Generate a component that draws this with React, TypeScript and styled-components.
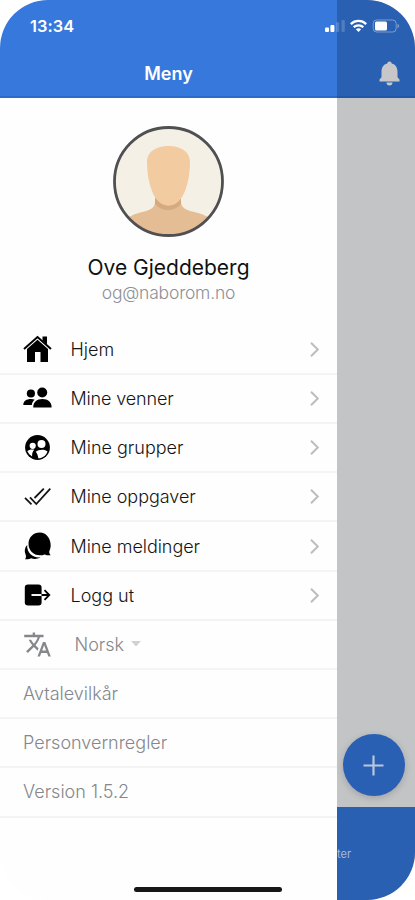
import React from "react";
import styled, { createGlobalStyle } from "styled-components";
import { MdTranslate } from "react-icons/md";

const GlobalStyle = createGlobalStyle`
  * { box-sizing: border-box; }
  body { margin: 0; background: #fff; font-family: Inter, "Liberation Sans", sans-serif; }
`;

const Screen = styled.main`
  position: relative;
  display: grid;
  grid-template-columns: 337px 78px;
  width: 415px;
  height: 900px;
  border-radius: 48px;
  overflow: hidden;
  background: #fff;
`;

const Drawer = styled.aside`
  display: flex;
  flex-direction: column;
  background: #fefefe;
`;

const DrawerHeader = styled.header`
  height: 97.5px;
  padding: 63px 0 0;
  background: #3778dc;
  border-bottom: 2px solid #2a6bcb;
  color: #fff;
  text-align: center;
  font-size: 18px;
  line-height: 22px;
  font-weight: 600;
`;

const StatusBar = styled.div`
  position: absolute;
  inset: 0 0 auto;
  display: flex;
  justify-content: space-between;
  padding: 16px 15px 0 30px;
`;

const Clock = styled.time`
  color: #fff;
  font-size: 16.4px;
  line-height: 20px;
  font-weight: 600;
  letter-spacing: 0.05px;
`;

const Profile = styled.section`
  display: flex;
  flex-direction: column;
  align-items: center;
  height: 228.2px;
  padding-top: 28px;
`;

const Name = styled.h1`
  margin: 17.500px 0 0;
  font-size: 21px;
  line-height: 28px;
  font-weight: 400;
  color: #111;
`;

const Email = styled.div`
  font-size: 17.5px;
  line-height: 22px;
  font-weight: 300;
  letter-spacing: -0.2px;
  color: #8f9095;
`;

const Row = styled.div<{ $muted?: boolean }>`
  display: flex;
  align-items: center;
  height: 49.2px;
  padding: 0 17px 0 23px;
  border-bottom: 2px solid #f4f4f5;
  color: ${(p) => (p.$muted ? "#85878b" : "#151515")};
  font-size: 18px;
  font-weight: 300;
`;

const IconBox = styled.span`
  display: flex;
  flex: none;
  width: 29px;
  margin-right: 18.5px;
`;

const Label = styled.span<{ $spacing?: number }>`
  letter-spacing: ${(p) => p.$spacing ?? 0}px;
  white-space: nowrap;
`;

const LanguageLabel = styled(Label)`
  margin: 0 7px 0 4px;
`;

const Chevron = styled.svg`
  margin-left: auto;
`;

const Backdrop = styled.section`
  display: flex;
  flex-direction: column;
  background: #c3c4c6;
`;

const BackdropHeader = styled.header`
  display: flex;
  justify-content: flex-end;
  height: 97.5px;
  padding: 61px 15px 0 0;
  background: #2a60b2;
  border-bottom: 2px solid #2058a9;
`;

const BackdropBody = styled.div`
  display: flex;
  flex: 1;
  align-items: flex-end;
  padding: 0 0 11px 5.5px;
`;

const AddButton = styled.button`
  display: grid;
  place-items: center;
  width: 62px;
  height: 62px;
  padding: 0;
  border: 0;
  border-radius: 50%;
  background: #2a60b4;
  box-shadow: 0 2px 7px rgba(0, 0, 0, 0.18);
`;

const TabBar = styled.nav`
  height: 93px;
  padding: 40px 0 0;
  background: #2a60b2;
  color: #a9b9d3;
  font-size: 11px;
  line-height: 14px;
`;

const HomeIndicator = styled.div`
  position: absolute;
  bottom: 8.5px;
  left: 134px;
  width: 148px;
  height: 5px;
  border-radius: 3px;
  background: #171717;
`;

const HomeIcon = () => (
  <svg width="29" height="28" viewBox="0 0 29 28">
    <path d="M1 14 14.5 2 28 14" fill="none" stroke="#000" strokeWidth="2" />
    <path d="M19.5 1.500H24V9.500L19.500 5.500ZM14.500 4.800 25 14V27H17.500V17H12V27H4V14Z" />
  </svg>
);

const FriendsIcon = () => (
  <svg width="29" height="22" viewBox="0 0 29 22">
    <circle cx="7.900" cy="6.500" r="4.100" />
    <path d="M.300 18C.300 14 3.500 12 8 12c1.500 0 2.700.2 3.800.8C9.800 14.200 9 16 8.800 18Z" />
    <circle cx="19.200" cy="5.500" r="5" />
    <path d="M10.200 20.500C10.200 15 13.700 12 19.400 12S28.600 15 28.600 20.500Z" />
  </svg>
);

const GroupsIcon = () => (
  <svg width="29" height="29" viewBox="0 0 29 29">
    <circle cx="14.500" cy="14.500" r="12.400" />
    <g fill="#fff">
      <circle cx="18.500" cy="11" r="4" />
      <circle cx="9.700" cy="12.800" r="3.100" />
      <path d="M12.800 18.800c2.200-2.200 8.800-3 11.700-.4-1 3.600-4.600 6.700-9.200 6.900-.3-2.600-1-4.600-2.500-6.500Z" />
      <path d="M4.300 18c1.700-1.500 4.500-2 7-1.200-1.600 1.500-2.400 3.700-2.200 6.800A10.500 10.500 0 0 1 4.300 18Z" />
    </g>
  </svg>
);

const TasksIcon = () => (
  <svg width="29" height="22" viewBox="0 0 29 22" fill="none" stroke="#151515" strokeWidth="1.800">
    <path d="m2 11.800 6.500 6.500M7 11.300l6.300 6.700L27.300 2.600M11.500 12 20.800 2.600" />
  </svg>
);

const MessagesIcon = () => (
  <svg width="29" height="30" viewBox="0 0 29 30">
    <path d="M4.200 14C3.500 22 10.500 27.300 17.500 26.300 14.500 28.500 10.500 28.300 8 27.200 6.300 28.300 4.500 28.500 2 28.200 3.300 26.800 3.200 25.200 2.500 23.300 1.200 20.300 1.600 16.500 4.200 14Z" />
    <path d="M16.800 1.500C10.500 1.500 5.500 6.200 5.500 12.800S10.300 24.300 16.800 24.300c2 0 3.700-.4 5-.9 1.500.8 3.400 1.100 6 .8-1.300-1.200-1.800-2.300-1.500-4C30.200 12.300 25.500 1.500 16.800 1.500Z" />
  </svg>
);

const LogoutIcon = () => (
  <svg width="29" height="22" viewBox="0 0 29 22">
    <rect x="1.800" y=".500" width="16.800" height="21" rx="3.200" />
    <path d="M8.500 11h10.100" stroke="#fff" strokeWidth="1.900" />
    <path d="M18.600 11h8M21.500 6.200 26.300 11l-4.800 4.800" fill="none" stroke="#000" strokeWidth="1.800" />
  </svg>
);

const Avatar = () => (
  <svg width="111" height="111" viewBox="0 0 111 111">
    <defs>
      <clipPath id="avatar-circle"><circle cx="55.500" cy="55.500" r="54" /></clipPath>
    </defs>
    <g clipPath="url(#avatar-circle)">
      <rect width="111" height="111" fill="#f5f0e5" />
      <path d="M0 98 18 90C27 85 42 86 42 76V70H68V76C68 86 84 85 93 90L111 98V111H0Z" fill="#e5bd94" />
      <path d="M42 73h26v5c-7 8-19 8-26 0Z" fill="#d5aa80" />
      <path d="M55.500 20C44 20 34 25 34 36c0 16 4 29 8 35 7 11.500 20 11.500 27 0 4-6 8-19 8-35C77 25 67 20 55.500 20Z" fill="#f2cca0" />
    </g>
    <circle cx="55.500" cy="55.500" r="54" fill="none" stroke="#505052" strokeWidth="2.800" />
  </svg>
);

const StatusIcons = () => (
  <svg width="75" height="20" viewBox="0 0 75 20" fill="#fff">
    <rect y="11.500" width="4" height="4.500" rx="1" />
    <rect x="5.400" y="8.900" width="4" height="7.100" rx="1" />
    <rect x="11" y="6.300" width="3.300" height="9.700" rx="1" opacity=".18" />
    <rect x="16.500" y="4" width="3.300" height="12" rx="1" opacity=".18" />
    <g fill="none" stroke="#fff" strokeWidth="2.300">
      <path d="M25.800 8.100c4.300-4.200 11.100-4.200 15.400 0M28.700 11.200c2.700-2.500 6.900-2.500 9.600 0" />
    </g>
    <path d="M30.800 13.200q2.700-2.100 5.400 0L33.500 16Z" />
    <rect x="48.200" y="4" width="23" height="12" rx="3.500" fill="none" stroke="#fff" opacity=".38" />
    <rect x="50" y="5.500" width="12" height="9" rx="1.500" />
    <path d="M72.500 7.800v4.500q1.700-.7 1.700-2.250T72.500 7.800Z" opacity=".4" />
  </svg>
);

const BellIcon = () => (
  <svg width="21" height="25" viewBox="0 0 21 25" fill="#c7c7c9">
    <path d="M10.500.600c1.300 0 2.100.9 2.200 2 4 .9 5.800 4.100 5.800 8.400v5.200l2 2.300V20.500H.500v-2l2-2.300V11c0-4.300 1.800-7.500 5.800-8.400.1-1.100.9-2 2.200-2ZM7.500 21.500h6a3 3 0 0 1-6 0Z" />
  </svg>
);

const menuItems = [
  { label: "Hjem", icon: <HomeIcon />, spacing: 0 },
  { label: "Mine venner", icon: <FriendsIcon />, spacing: -0.15 },
  { label: "Mine grupper", icon: <GroupsIcon />, spacing: 0 },
  { label: "Mine oppgaver", icon: <TasksIcon />, spacing: -0.05 },
  { label: "Mine meldinger", icon: <MessagesIcon />, spacing: -0.05 },
  { label: "Logg ut", icon: <LogoutIcon />, spacing: 0 },
];

export default function App() {
  return (
    <>
      <GlobalStyle />
      <Screen>
        <Drawer>
          <DrawerHeader>Meny</DrawerHeader>
          <Profile>
            <Avatar />
            <Name>Ove Gjeddeberg</Name>
            <Email>og@naborom.no</Email>
          </Profile>
          {menuItems.map((item) => (
            <Row key={item.label}>
              <IconBox>{item.icon}</IconBox>
              <Label $spacing={item.spacing}>{item.label}</Label>
              <Chevron width="11" height="17" viewBox="0 0 11 17" fill="none" stroke="#bdbdbf" strokeWidth="2">
                <path d="m2 1.800 6.800 6.700L2 15.200" />
              </Chevron>
            </Row>
          ))}
          <Row $muted>
            <IconBox><MdTranslate size={29} /></IconBox>
            <LanguageLabel>Norsk</LanguageLabel>
            <svg width="10" height="6" viewBox="0 0 10 6"><path d="M0 0h10L5 5.500Z" fill="#d0d1d3" /></svg>
          </Row>
          <Row $muted><Label>Avtalevilkår</Label></Row>
          <Row $muted><Label>Personvernregler</Label></Row>
          <Row $muted><Label>Version 1.5.2</Label></Row>
        </Drawer>
        <Backdrop>
          <BackdropHeader><BellIcon /></BackdropHeader>
          <BackdropBody>
            <AddButton aria-label="+">
              <svg width="21" height="21" viewBox="0 0 21 21" stroke="#b9c7dd" strokeWidth="2.200">
                <path d="M.500 10.500h20M10.500.500v20" />
              </svg>
            </AddButton>
          </BackdropBody>
          <TabBar>ter</TabBar>
        </Backdrop>
        <StatusBar>
          <Clock>13:34</Clock>
          <StatusIcons />
        </StatusBar>
        <HomeIndicator />
      </Screen>
    </>
  );
}
